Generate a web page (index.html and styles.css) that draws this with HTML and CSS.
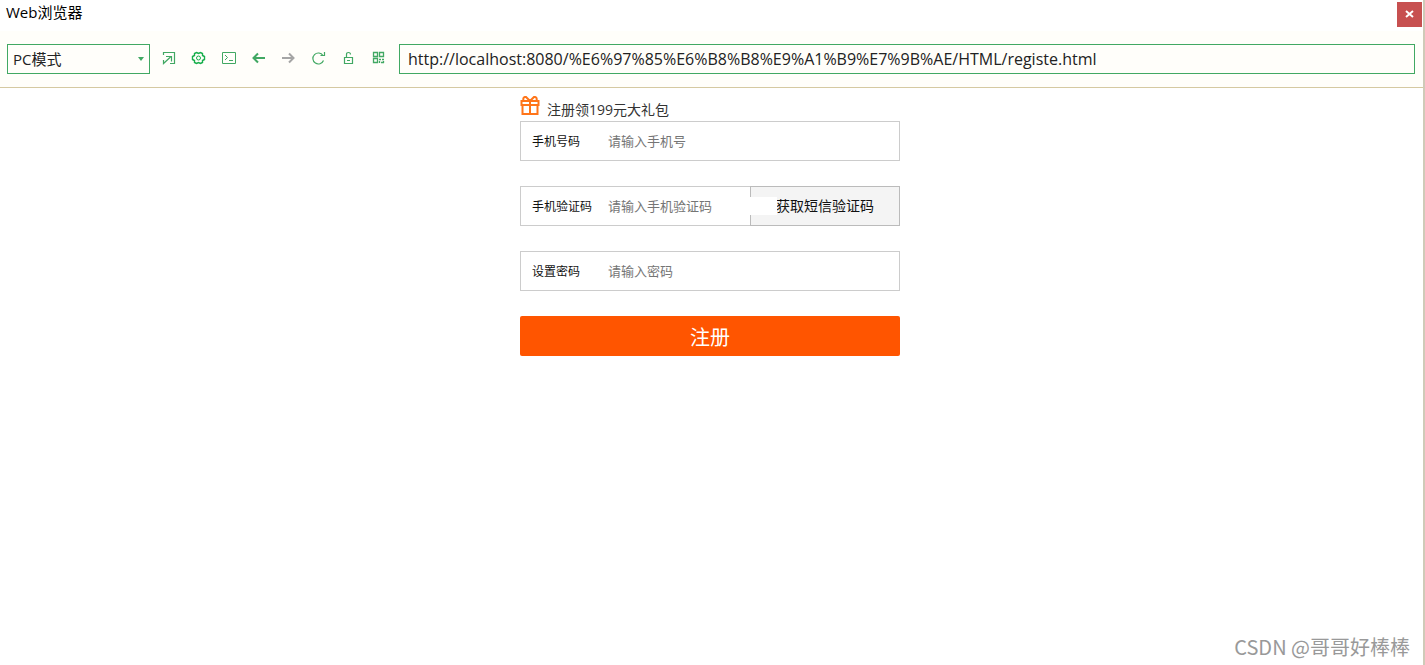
FILE: index.html
```html
<!DOCTYPE html>
<html lang="zh-CN">
<head>
<meta charset="utf-8">
<title>Web浏览器</title>
<link rel="stylesheet" href="styles.css">
</head>
<body>
<div class="window">
  <header class="titlebar">
    <span class="title">Web浏览器</span>
    <button class="close" type="button" aria-label="关闭">
      <svg width="9" height="8" viewBox="0 0 9 8"><path d="M1 1L8 7M8 1L1 7" fill="none" stroke="#fff" stroke-width="2"/></svg>
    </button>
  </header>
  <nav class="toolbar">
    <div class="mode">
      <select class="mode-select" aria-label="模式"><option>PC模式</option></select>
      <svg class="mode-arrow" width="6" height="4" viewBox="0 0 6 4"><path d="M0 0H6L3 4Z" fill="#41a863"/></svg>
    </div>
    <div class="tools">
      <button class="tool" type="button" aria-label="打开"><svg class="icon" viewBox="0 0 16 16"><path d="M2.5 4V1.5H13.5V12.5H9M2.5 9V12.5L9.5 6M5 5.5H10.5V10.5" stroke-width="1.2"/></svg></button>
      <button class="tool tool-bright" type="button" aria-label="设置"><svg class="icon" viewBox="0 0 16 16"><path d="M5.5 1.5L7.5 2.5L9.5 1.5L11.5 2.5V4.5L13.5 5.5V8.5L11.5 9.5V11.5L9.5 12.5L7.5 11.5L5.5 12.5L3.5 11.5V9.5L1.5 8.5V5.5L3.5 4.5V2.5Z" stroke-width="1.4"/><circle cx="7.5" cy="7" r="2"/></svg></button>
      <button class="tool" type="button" aria-label="控制台"><svg class="icon" viewBox="0 0 16 16"><path d="M1.5 1.5H14.5V12.5H1.5ZM4 4L6.5 6.5L4 9M8 9.5H12"/></svg></button>
      <button class="tool" type="button" aria-label="后退"><svg class="icon" viewBox="0 0 16 16"><path d="M14 7H2.5M7 2.5L2.5 7L7 11.5" stroke-width="2"/></svg></button>
      <button class="tool tool-off" type="button" aria-label="前进"><svg class="icon" viewBox="0 0 16 16"><path d="M1 7H12.5M8 2.5L12.5 7L8 11.5" stroke-width="2"/></svg></button>
      <button class="tool" type="button" aria-label="刷新"><svg class="icon" viewBox="0 0 16 16"><path d="M12.5 9.5A5.5 5.5 0 1 1 12 4.5M13.5 1V4.5H9.5" stroke-width="1.2"/></svg></button>
      <button class="tool" type="button" aria-label="锁定"><svg class="icon" viewBox="0 0 16 16"><path d="M3.500 6.500H11.500V12.500H3.500ZM5.500 6.500V3.500Q5.500 1.500 7.500 1.500Q9.500 1.500 9.500 3.500M6 9.500H9" stroke-width="1.2"/></svg></button>
      <button class="tool" type="button" aria-label="二维码"><svg class="icon" viewBox="0 0 16 16"><path d="M2.500 1.500H6.500V5.500H2.500ZM8.500 1.500H12.500V5.500H8.500ZM2.500 7.500H6.500V11.500H2.500ZM8 8.500H10M11 8.500H13M8.500 10V12M10 11.500H13M12.500 10V12" stroke-width="1.3"/></svg></button>
    </div>
    <input class="url" type="text" aria-label="网址" value="http://localhost:8080/%E6%97%85%E6%B8%B8%E9%A1%B9%E7%9B%AE/HTML/registe.html">
  </nav>
  <main class="page">
    <form class="register">
      <div class="promo">
        <svg class="gift" viewBox="0 0 20 20"><path d="M1.500 5H18.500V9H1.500ZM2.500 9V18H17.500V9M10 5V18M10 5L6 1Q2.500 0.500 3.500 5M10 5L14 1Q17.500 0.500 16.500 5"/></svg>
        <span>注册领199元大礼包</span>
      </div>
      <div class="field">
        <label class="label" for="phone">手机号码</label>
        <input class="entry" id="phone" type="tel" placeholder="请输入手机号">
      </div>
      <div class="field">
        <label class="label" for="code">手机验证码</label>
        <input class="entry" id="code" type="text" placeholder="请输入手机验证码">
        <button class="sms" type="button">获取短信验证码</button>
      </div>
      <div class="field">
        <label class="label" for="password">设置密码</label>
        <input class="entry" id="password" type="password" placeholder="请输入密码">
      </div>
      <button class="submit" type="button">注册</button>
    </form>
  </main>
  <div class="watermark">CSDN @哥哥好棒棒</div>
</div>
</body>
</html>
```
FILE: styles.css
```css
* { box-sizing: border-box; }

body {
  margin: 0;
  font-family: "Open Sans", "Noto Sans CJK SC", sans-serif;
  color: #222;
  background: #fff;
}

button, input, select { font-family: inherit; margin: 0; }

.window {
  position: relative;
  display: flex;
  flex-direction: column;
  min-height: 100vh;
  border-right: 2px solid #cfcab8;
}

.titlebar {
  display: flex;
  justify-content: space-between;
  align-items: flex-start;
  height: 31px;
  padding: 2px 1px 0 6px;
}

.title { font-size: 15px; line-height: 20px; color: #000; }

.close {
  display: flex;
  align-items: center;
  justify-content: center;
  width: 25px;
  height: 25px;
  padding: 0 0 2px;
  border: 0;
  background: #c75050;
}

.toolbar {
  display: flex;
  align-items: center;
  gap: 4px;
  height: 57px;
  padding: 0 8px 0 7px;
  background: #fffefa;
  border-bottom: 1px solid #d5c9a1;
}

.mode { position: relative; width: 143px; }

.mode-select {
  appearance: none;
  display: block;
  width: 100%;
  height: 30px;
  padding: 0 5px;
  border: 1px solid #41a863;
  border-radius: 0;
  background: #fffefa;
  color: #222;
  font-size: 15px;
}

.mode-arrow { position: absolute; right: 6px; top: 13px; }

.tools { display: flex; padding-right: 1px; }

.tool {
  display: flex;
  align-items: center;
  justify-content: center;
  width: 30px;
  height: 30px;
  padding: 0;
  border: 0;
  background: none;
  color: #41a863;
}

.tool-bright { color: #16ae4b; }
.tool-off { color: #a5a5a5; }

.icon { width: 16px; height: 16px; fill: none; stroke: currentColor; }

.url {
  flex: 1;
  min-width: 0;
  height: 30px;
  padding: 0 8px;
  border: 1px solid #41a863;
  background: #fffefa;
  color: #222;
  font-size: 16px;
}

.page { flex: 1; padding: 8px 3px 0 0; }

.register {
  display: flex;
  flex-direction: column;
  width: 380px;
  margin: 0 auto;
}

.promo {
  display: flex;
  gap: 7px;
  height: 25px;
  font-size: 14px;
  line-height: 28px;
  color: #333;
}

.gift { width: 20px; height: 20px; fill: none; stroke: #ff7519; stroke-width: 2; }

.field {
  display: flex;
  align-items: center;
  height: 40px;
  margin-bottom: 25px;
  padding-left: 11px;
  border: 1px solid #ccc;
}

.label { flex: none; width: 76px; font-size: 12px; color: #111; }

.entry {
  position: relative;
  z-index: 1;
  flex: none;
  width: 169px;
  height: 18px;
  padding: 0;
  border: 0;
  background: #fff;
  font-size: 13px;
}

.entry::placeholder { color: #757575; }

.sms {
  flex: 1;
  align-self: stretch;
  margin: -1px -1px -1px -27px;
  padding: 0 0 2px;
  border: 1px solid #bbb;
  background: #f4f4f4;
  color: #111;
  font-size: 14px;
}

.submit {
  height: 40px;
  padding: 0;
  border: 0;
  border-radius: 2px;
  background: #ff5500;
  color: #fff;
  font-size: 20px;
}

.watermark {
  align-self: flex-end;
  padding: 0 13px 4px 0;
  font-family: "Noto Sans CJK SC", sans-serif;
  font-size: 20px;
  line-height: 28px;
  color: #999;
}
```
